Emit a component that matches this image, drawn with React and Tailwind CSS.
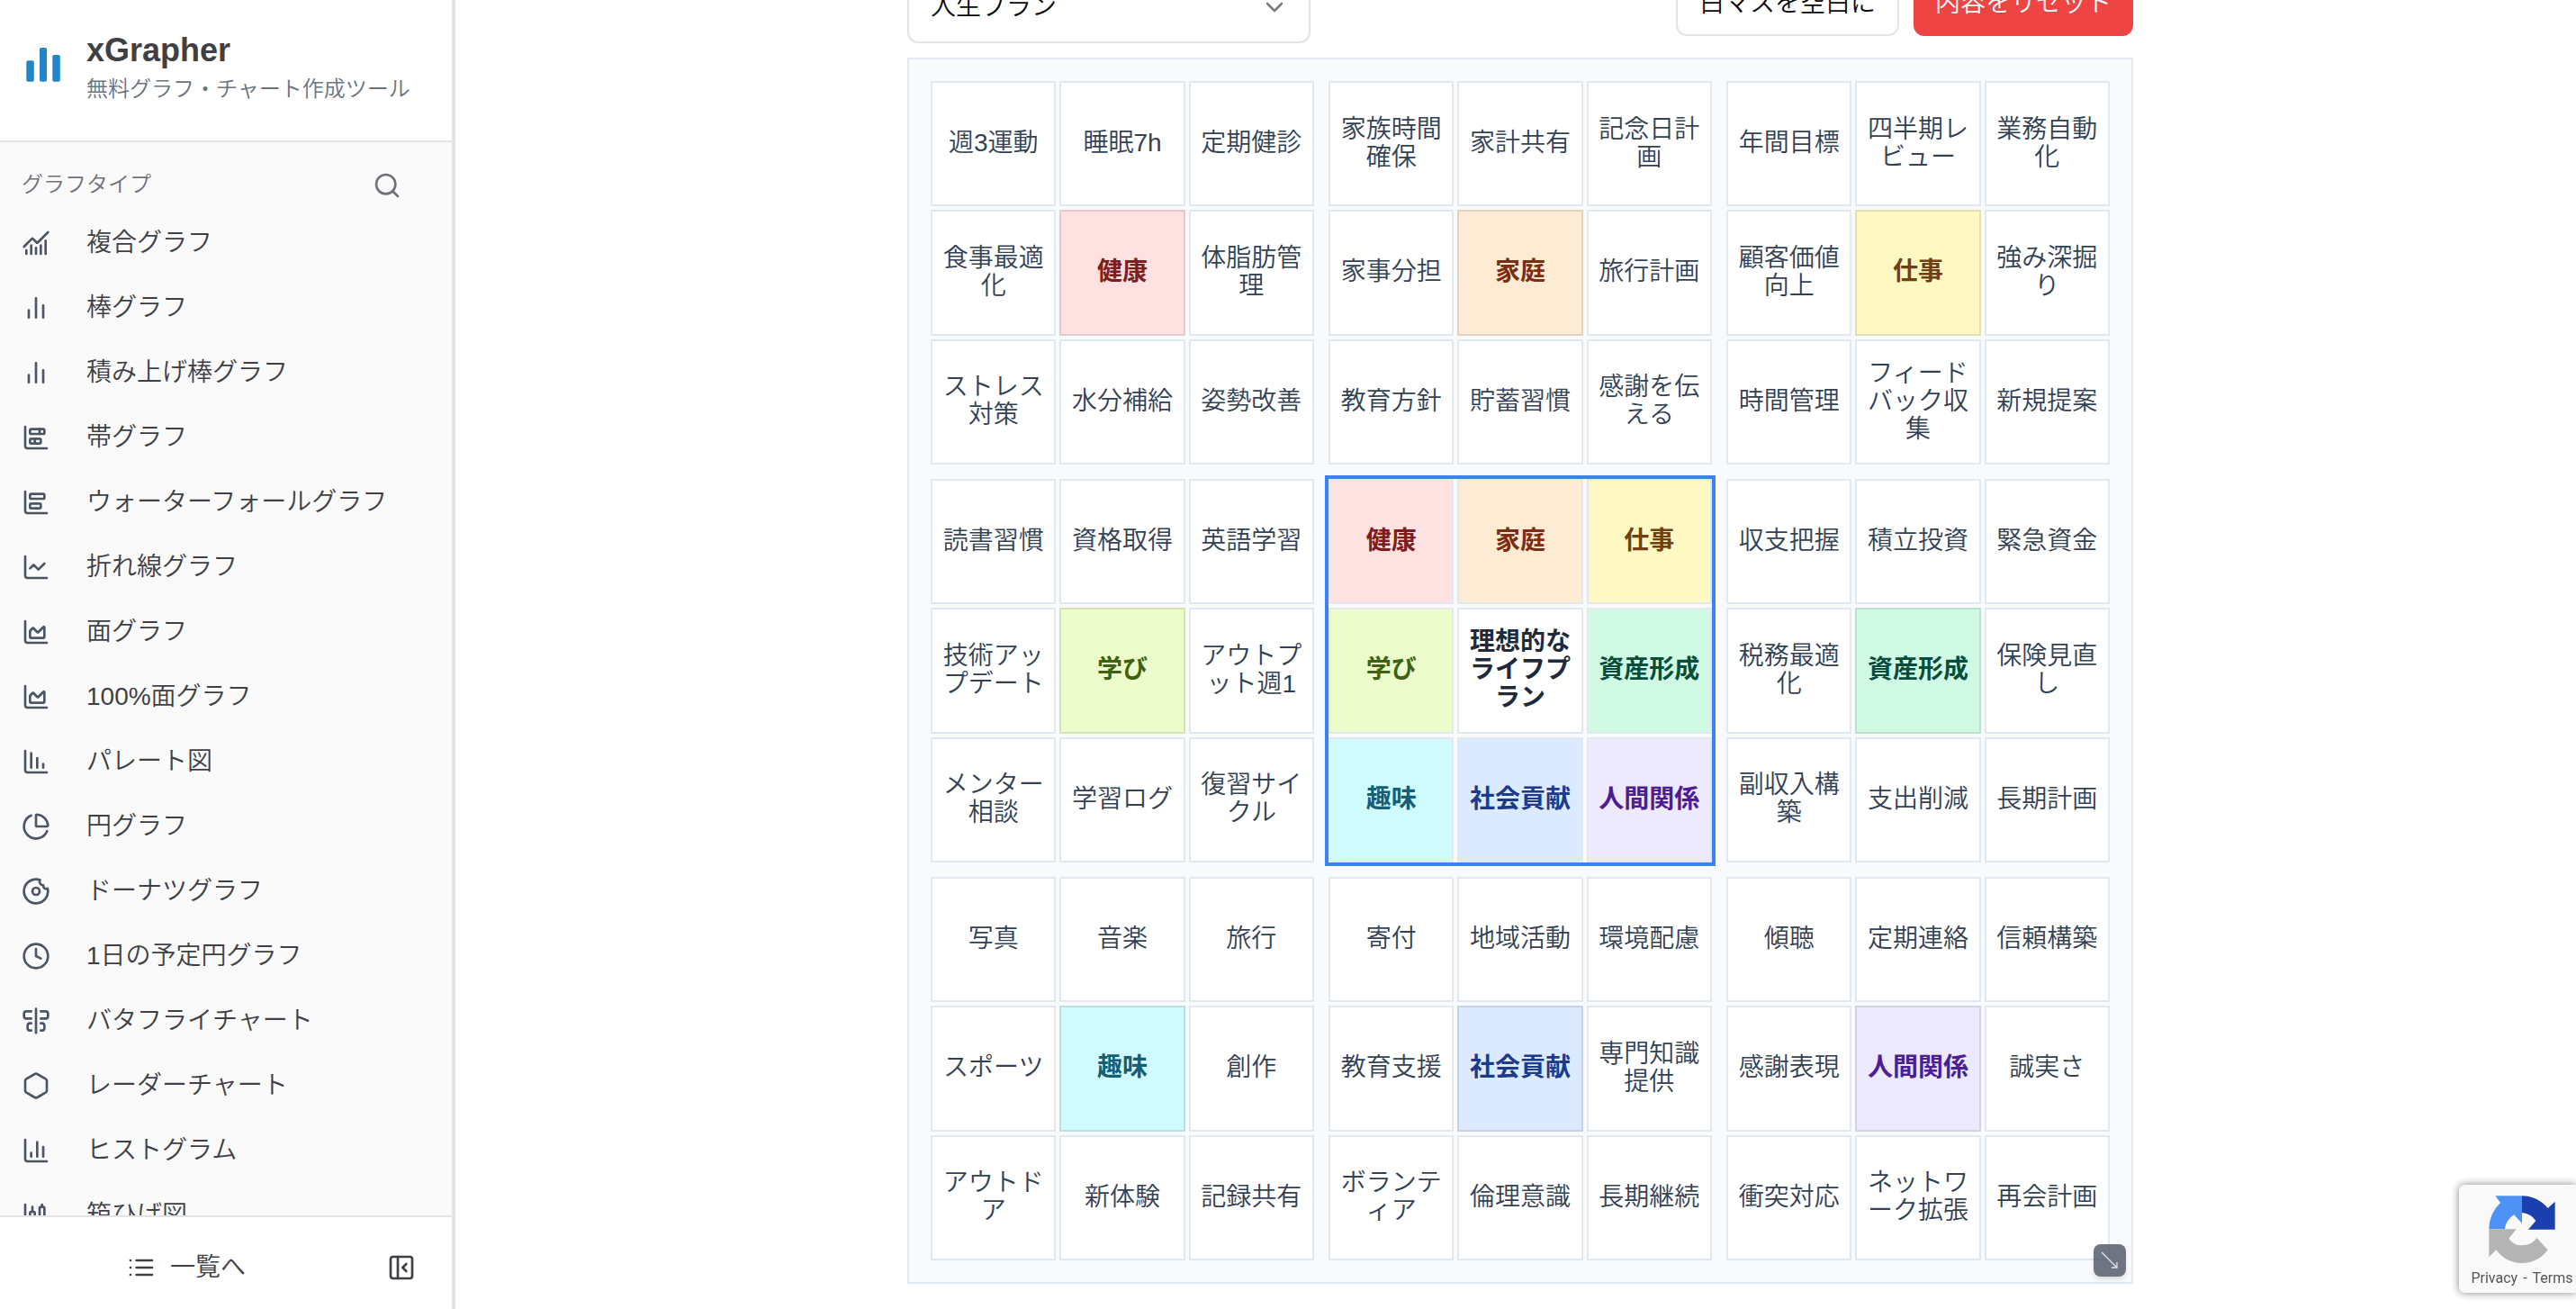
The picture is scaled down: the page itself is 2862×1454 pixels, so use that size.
import {
  ChartNoAxesCombined, ChartBarStacked, ChartBarBig, ChartLine, ChartArea,
  ChartColumnDecreasing, ChartPie, Donut, Clock, AlignCenterVertical, Hexagon,
  ChartColumn, ChartCandlestick, Search, PanelLeftClose, ChevronDown,
} from "lucide-react";

function BarsIcon(props) {
  return (
    <svg viewBox="0 0 24 24" fill="none" stroke="currentColor" strokeWidth="2" strokeLinecap="round" strokeLinejoin="round" aria-hidden="true" {...props}>
      <path d="M18 20V10M12 20V4M6 20v-6" />
    </svg>
  );
}

function ListIcon(props) {
  return (
    <svg viewBox="0 0 24 24" fill="none" stroke="currentColor" strokeWidth="2" strokeLinecap="round" strokeLinejoin="round" aria-hidden="true" {...props}>
      <path d="M8 6h13M8 12h13M8 18h13M3 6h.01M3 12h.01M3 18h.01" />
    </svg>
  );
}

function Logo() {
  return (
    <svg viewBox="0 0 48 48" className="size-12 shrink-0" fill="#2185c9" aria-hidden="true">
      <rect x="5.300" y="23.300" width="8.500" height="23.400" rx="1.800" />
      <rect x="20" y="9" width="8" height="37.700" rx="1.800" />
      <rect x="34.300" y="17" width="8.500" height="29.700" rx="1.800" />
    </svg>
  );
}

const items = [
  [ChartNoAxesCombined, "複合グラフ"],
  [BarsIcon, "棒グラフ"],
  [BarsIcon, "積み上げ棒グラフ"],
  [ChartBarStacked, "帯グラフ"],
  [ChartBarBig, "ウォーターフォールグラフ"],
  [ChartLine, "折れ線グラフ"],
  [ChartArea, "面グラフ"],
  [ChartArea, "100%面グラフ"],
  [ChartColumnDecreasing, "パレート図"],
  [ChartPie, "円グラフ"],
  [Donut, "ドーナツグラフ"],
  [Clock, "1日の予定円グラフ"],
  [AlignCenterVertical, "バタフライチャート"],
  [Hexagon, "レーダーチャート"],
  [ChartColumn, "ヒストグラム"],
  [ChartCandlestick, "箱ひげ図"],
];

function Sidebar() {
  return (
    <aside className="flex h-screen w-[506px] shrink-0 flex-col border-r-4 border-[#e4e4e7] bg-white text-[#3f3f46]">
      <a href="#" className="flex h-[158px] shrink-0 items-start gap-6 border-b-2 border-[#e4e4e7] pt-8 pl-6">
        <div className="pt-3"><Logo /></div>
        <div>
          <div className="text-[36px] leading-[48px] font-bold">xGrapher</div>
          <div className="text-2xl leading-[38px] text-[#6b7280]">無料グラフ・チャート作成ツール</div>
        </div>
      </a>
      <nav className="min-h-0 flex-1 overflow-hidden bg-[#fafafa] pt-5">
        <div className="flex h-14 items-center justify-between pr-14 pl-6 text-[#71717a]">
          <h2 className="pb-0.5 text-2xl font-[350]">グラフタイプ</h2>
          <button aria-label="検索"><Search className="size-8" /></button>
        </div>
        <ul>
          {items.map(([Icon, label]) => (
            <li key={label}>
              <a href="#" className="flex h-[72px] items-center gap-10 pl-6">
                <Icon className="size-8 shrink-0 text-[#4b5563]" />
                <span className="text-[28px] leading-10">{label}</span>
              </a>
            </li>
          ))}
        </ul>
      </nav>
      <div className="flex h-[104px] shrink-0 items-center gap-4 border-t-2 border-[#e4e4e7] pt-2.5 pr-10">
        <button className="flex flex-1 items-center justify-center gap-4 text-[28px] leading-10">
          <ListIcon className="size-8" />
          一覧へ
        </button>
        <button aria-label="サイドバーを閉じる"><PanelLeftClose className="size-8" /></button>
      </div>
    </aside>
  );
}

const themes = {
  健康: "bg-[#fee2e2] text-[#7f1d1d]",
  家庭: "bg-[#fdebd3] text-[#7c2d12]",
  仕事: "bg-[#fef9c3] text-[#713f12]",
  学び: "bg-[#ecfccb] text-[#3f6212]",
  資産形成: "bg-[#d1fae5] text-[#064e3b]",
  趣味: "bg-[#cffafe] text-[#155e75]",
  社会貢献: "bg-[#dbeafe] text-[#1e3a8a]",
  人間関係: "bg-[#ede9fe] text-[#4c1d95]",
};

const groups = [
  ["週3運動", "睡眠7h", "定期健診", "食事最適化", "健康", "体脂肪管理", "ストレス対策", "水分補給", "姿勢改善"],
  ["家族時間確保", "家計共有", "記念日計画", "家事分担", "家庭", "旅行計画", "教育方針", "貯蓄習慣", "感謝を伝える"],
  ["年間目標", "四半期レビュー", "業務自動化", "顧客価値向上", "仕事", "強み深掘り", "時間管理", "フィードバック収集", "新規提案"],
  ["読書習慣", "資格取得", "英語学習", "技術アップデート", "学び", "アウトプット週1", "メンター相談", "学習ログ", "復習サイクル"],
  ["健康", "家庭", "仕事", "学び", "理想的なライフプラン", "資産形成", "趣味", "社会貢献", "人間関係"],
  ["収支把握", "積立投資", "緊急資金", "税務最適化", "資産形成", "保険見直し", "副収入構築", "支出削減", "長期計画"],
  ["写真", "音楽", "旅行", "スポーツ", "趣味", "創作", "アウトドア", "新体験", "記録共有"],
  ["寄付", "地域活動", "環境配慮", "教育支援", "社会貢献", "専門知識提供", "ボランティア", "倫理意識", "長期継続"],
  ["傾聴", "定期連絡", "信頼構築", "感謝表現", "人間関係", "誠実さ", "衝突対応", "ネットワーク拡張", "再会計画"],
];

function Cell({ label, isCore, inCenter }) {
  const theme = themes[label];
  let look = "bg-white text-[#334155]";
  if (theme) look = theme + " font-bold";
  else if (isCore) look = "bg-white font-bold text-[#1e293b]";
  const border = theme && !inCenter ? "border-black/10" : "border-[#e2e8f0]";
  return (
    <button className={`flex min-w-0 items-center justify-center border-2 px-2 pb-0.5 text-center text-[28px] leading-[31px] break-all ${look} ${border}`}>
      {label}
    </button>
  );
}

function Board() {
  return (
    <section className="relative grid aspect-square w-full grid-cols-3 grid-rows-3 gap-4 border-2 border-[#e2e8f0] bg-[#f8fafc] p-6">
      {groups.map((cells, g) => (
        <div key={g} className={`grid min-h-0 grid-cols-3 grid-rows-3 gap-1 ${g === 4 ? "ring-4 ring-[#3b82f6]" : ""}`}>
          {cells.map((label, i) => (
            <Cell key={i} label={label} isCore={i === 4} inCenter={g === 4} />
          ))}
        </div>
      ))}
      <button aria-label="サイズ変更" className="absolute right-1.5 bottom-1.5 flex size-9 items-center justify-center rounded-lg bg-[#4b5263]/80 text-white/80 shadow-md">
        <svg viewBox="0 0 20 20" className="size-5" fill="none" stroke="currentColor" strokeWidth="1.3" aria-hidden="true">
          <path d="M1 1l17 17M12 18h6v-6" />
        </svg>
      </button>
    </section>
  );
}

function Recaptcha() {
  return (
    <div className="fixed right-0 bottom-[18px] flex h-[120px] w-[130px] flex-col items-center rounded-l-md bg-[#f9f9f9] pt-3 pl-2.5 font-normal shadow-[0_0_10px_#808080]">
      <svg viewBox="0 0 222 228" className="h-[76px] w-[74px]" aria-hidden="true">
        <path fill="#4e92f6" d="M22 1H111V92L84 64Q56 84 54 112H1Q1 60 39 24Z" />
        <path fill="#1c3fae" d="M111 1Q165 3 197 42L221 20V113H132L157 84Q141 60 111 57Z" />
        <path fill="#b4b4b4" d="M1 112H92L67 143Q82 166 111 166Q143 166 160 141L197 181Q164 225 111 225Q57 225 25 181L1 205Z" />
      </svg>
      <div className="mt-1.5 flex gap-1.5 font-[Roboto] text-base leading-5 whitespace-nowrap text-[#555]">
        <a href="#">Privacy</a>
        <span>-</span>
        <a href="#">Terms</a>
      </div>
    </div>
  );
}

export default function App() {
  return (
    <div className="flex h-screen overflow-hidden bg-white font-['Liberation_Sans','Noto_Sans_CJK_JP',sans-serif] font-[350]">
      <Sidebar />
      <main className="min-w-0 flex-1 overflow-hidden pl-2.5">
        <div className="mx-auto -mt-8 w-full max-w-[1362px]">
          <div className="flex h-20 items-start justify-between">
            <div className="relative w-[448px]">
              <select aria-label="テンプレート" className="h-20 w-full appearance-none rounded-xl border-2 border-[#e4e4e7] bg-white px-6 text-[28px] text-[#09090b]">
                <option>人生プラン</option>
              </select>
              <ChevronDown className="pointer-events-none absolute top-6 right-6 size-8 text-black/50" />
            </div>
            <div className="flex gap-4 text-[28px]">
              <button className="h-[72px] rounded-xl border-2 border-[#e4e4e7] bg-white px-6 text-[#09090b]">白マスを空白に</button>
              <button className="h-[72px] rounded-xl bg-[#ef4444] px-6 text-[#fafafa]">内容をリセット</button>
            </div>
          </div>
          <div className="mt-4">
            <Board />
          </div>
        </div>
      </main>
      <Recaptcha />
    </div>
  );
}
